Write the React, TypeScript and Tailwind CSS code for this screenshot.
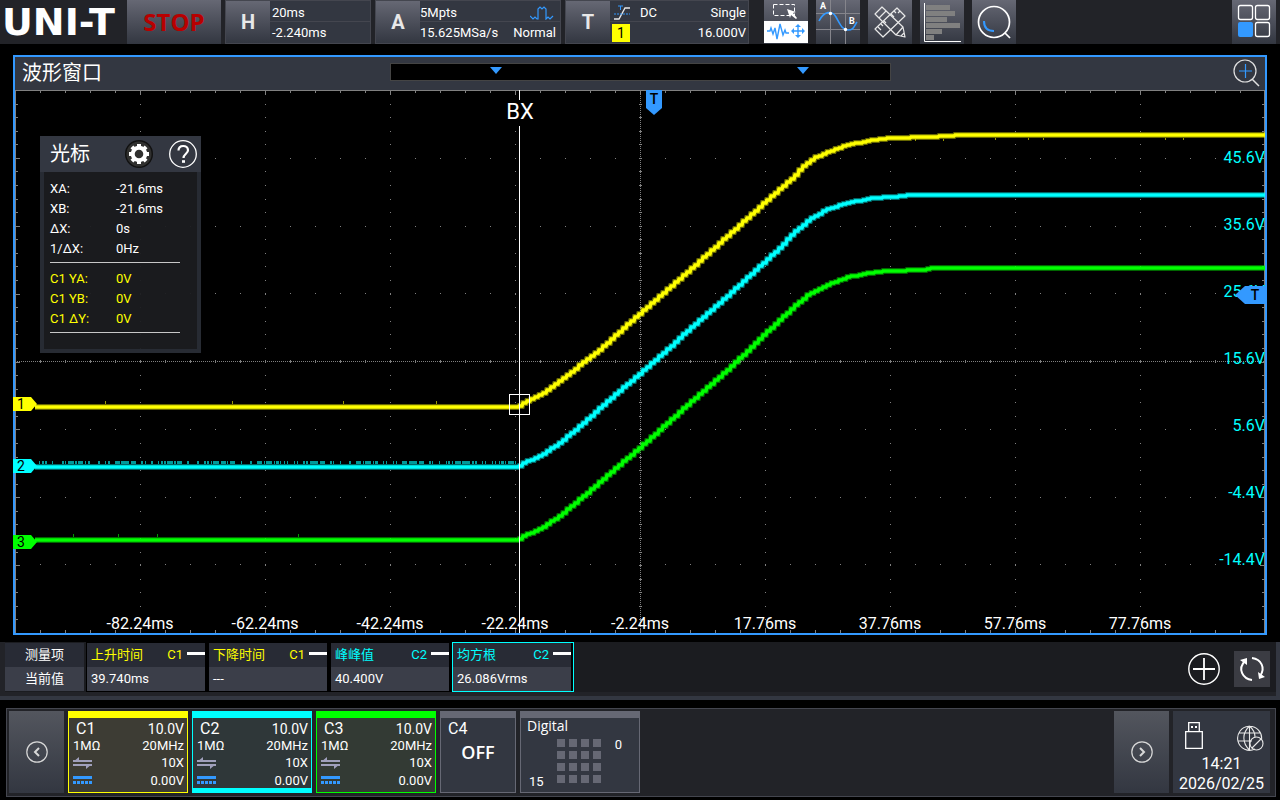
import type { ReactNode } from "react";

const PLOT_W = 1250;
const PLOT_H = 543;

type Point = [number, number];

const rise: Record<string, Point[]> = {
  c1: [
    [0, 317], [502, 317], [506, 314], [525, 305], [542, 292], [562, 277], [585, 259], [608, 238],
    [625, 223], [648, 203], [675, 179], [715, 143], [765, 98], [775, 90], [785, 79], [798, 68],
    [815, 61], [832, 55], [852, 51], [875, 48], [915, 47], [945, 45], [1250, 45],
  ],
  c2: [
    [0, 377], [502, 377], [506, 374], [525, 366], [545, 352], [568, 333], [592, 311], [625, 283],
    [648, 263], [675, 238], [715, 203], [765, 157], [778, 143], [795, 129], [812, 119], [832, 113],
    [858, 108], [888, 106], [893, 105], [1250, 105],
  ],
  c3: [
    [0, 450], [502, 450], [506, 447], [525, 439], [545, 425], [568, 406], [592, 385], [625, 357],
    [655, 330], [675, 312], [715, 277], [765, 229], [778, 217], [795, 203], [812, 195], [832, 187],
    [848, 184], [868, 181], [908, 180], [915, 178], [1250, 178],
  ],
};

const valueAt = (points: Point[], x: number) => {
  const i = points.findIndex((p) => p[0] > x);
  if (i < 1) return points[points.length - 1][1];
  const [x0, y0] = points[i - 1];
  const [x1, y1] = points[i];
  return y0 + ((y1 - y0) * (x - x0)) / (x1 - x0);
};

// sampled every 4px and held for most of a step, so the slope looks jagged like the scope draws it
const steppedPath = (points: Point[]) => {
  let d = `M20 ${points[0][1]}`;
  for (let x = 24; x <= PLOT_W; x += 4) {
    d += `H${x - 1}L${x} ${Math.round(valueAt(points, x))}`;
  }
  return d + `H${PLOT_W}`;
};

const range = (n: number) => Array.from({ length: n }, (_, i) => i);

const noiseTicks = range(480)
  .map((i) => 22 + i)
  .filter((x) => Math.sin(x * 0.7) + Math.sin(x * 1.9) + Math.sin(x * 0.13) > 0.1);

const traces = [
  { id: "c1", color: "#ffff00" },
  { id: "c2", color: "#00ffff" },
  { id: "c3", color: "#00ff00" },
];

const timeLabels = [
  "-82.24ms", "-62.24ms", "-42.24ms", "-22.24ms", "-2.24ms", "17.76ms", "37.76ms", "57.76ms", "77.76ms",
];
const voltLabels = ["45.6V", "35.6V", "25.6V", "15.6V", "5.6V", "-4.4V", "-14.4V"];

const pctX = (x: number) => `${(x / PLOT_W) * 100}%`;
const pctY = (y: number) => `${(y / PLOT_H) * 100}%`;

const Graticule = () => {
  const stepX = PLOT_W / 50;
  const stepY = PLOT_H / 40;
  return (
    <g stroke="#808080" strokeWidth="1" shapeRendering="crispEdges">
      {range(9).map((i) =>
        i === 4 ? null : (
          <line key={`v${i}`} x1={(i + 1) * 125 + 0.5} x2={(i + 1) * 125 + 0.5} y1={stepY} y2={PLOT_H}
            strokeDasharray={`1 ${stepY - 1}`} />
        )
      )}
      {range(7).map((i) =>
        i === 3 ? null : (
          <line key={`h${i}`} x1={stepX} x2={PLOT_W} y1={Math.round((i + 1) * 67.75) + 0.5} y2={Math.round((i + 1) * 67.75) + 0.5}
            strokeDasharray={`1 ${stepX - 1}`} />
        )
      )}
      <path d={`M0 271.5H${PLOT_W}M625.5 0V${PLOT_H}`} strokeDasharray="1 1" />
      <path d={`M0 .5H${PLOT_W}M.5 0V${PLOT_H}M${PLOT_W - 0.5} 0V${PLOT_H}`} />
      {range(49).map((i) => {
        const x = (i + 1) * stepX + 0.5;
        const len = (i + 1) % 5 === 0 ? 5 : 3;
        return <path key={x} d={`M${x} 0v${len}M${x} ${PLOT_H}v-${len}M${x} 270v3`} />;
      })}
      {range(39).map((i) => {
        const y = Math.round((i + 1) * stepY) + 0.5;
        const len = (i + 1) % 5 === 0 ? 5 : 3;
        return <path key={y} d={`M0 ${y}h${len}M${PLOT_W} ${y}h-${len}M624 ${y}h3`} />;
      })}
    </g>
  );
};

const Waveforms = () => (
  <svg
    className="absolute inset-0 h-full w-full"
    viewBox={`0 0 ${PLOT_W} ${PLOT_H}`}
    preserveAspectRatio="none"
  >
    <Graticule />
    {traces.map(({ id, color }) => {
      const d = steppedPath(rise[id]);
      return (
        <g key={id} fill="none" stroke={color}>
          <path d={d} strokeWidth="6" strokeOpacity="0.4" />
          <path d={d} strokeWidth="3.500" />
        </g>
      );
    })}
    <g shapeRendering="crispEdges" fill="none" strokeWidth="1">
      <path d={noiseTicks.map((x) => `M${x + 0.5} 371v3`).join("")} stroke="#00ffff" strokeOpacity="0.6" />
      <path d="M90.5 311v3M217.5 311v3M328.5 311v3M421.5 311v3M900.5 49v2M928.5 49v2M980.5 48v2M1013.5 48v2M1028.5 48v2M1150.5 48v2M1168.5 48v2" stroke="#ffff00" strokeOpacity="0.6" />
      <path d="M58.5 444v3M103.5 444v3M142.5 444v3M283.5 444v3" stroke="#00ff00" strokeOpacity="0.6" />
      <path d="M504.5 0V10M504.5 36V543" stroke="#ffffff" />
      <rect x="494.5" y="304.5" width="20" height="20" stroke="#ffffff" />
    </g>
  </svg>
);

const ChannelTag = ({ label, y, fill }: { label: string; y: number; fill: string }) => (
  <button className="absolute -left-0.5 h-3.5 w-6 -translate-y-1/2" style={{ top: pctY(y) }}>
    <svg className="absolute inset-0" width="24" height="14" viewBox="0 0 24 14">
      <path d="M0 0H18L24 7L18 14H0Z" fill={fill} />
    </svg>
    <span className="relative block w-4 text-center text-sm leading-3.5 text-black">{label}</span>
  </button>
);

const CursorPanel = () => {
  const rows = [
    ["XA:", "-21.6ms"],
    ["XB:", "-21.6ms"],
    ["ΔX:", "0s"],
    ["1/ΔX:", "0Hz"],
  ];
  const yRows = [
    ["C1 YA:", "0V"],
    ["C1 YB:", "0V"],
    ["C1 ΔY:", "0V"],
  ];
  return (
    <section className="absolute left-[25px] top-[46px] w-[161px] border-4 border-t-0 border-[#272b33] bg-[#1b1c20]/95">
      <header className="-mx-1 flex h-9 items-center bg-[#333741] pl-2.5 pr-1">
        <h2 className="flex-1 text-xl text-white">光标</h2>
        <button aria-label="Settings" className="mr-4">
          <svg width="28" height="28" viewBox="0 0 28 28">
            <circle cx="14" cy="14" r="13.3" fill="#30302f" stroke="#111" strokeWidth="1.4" />
            <circle cx="14" cy="14" r="6.3" fill="none" stroke="#fff" strokeWidth="4" />
            <g stroke="#fff" strokeWidth="4">
              <path d="M14 4v3M14 21v3M4 14h3M21 14h3M6.9 6.9l2 2M19.1 19.1l2 2M6.9 21.1l2-2M19.1 8.9l2-2" />
            </g>
          </svg>
        </button>
        <button aria-label="Help">
          <svg width="28" height="28" viewBox="0 0 28 28" fill="none" stroke="#fff">
            <circle cx="14" cy="14" r="13.3" strokeWidth="1.3" />
            <path d="M9.5 10.5C9.5 7.5 11.5 6 14.2 6C17 6 19 7.7 19 10.2C19 13.5 14.5 14 14.5 18" strokeWidth="2.2" />
            <path d="M13 21.5h3" strokeWidth="2.6" />
          </svg>
        </button>
      </header>
      <div className="pb-4 pl-1.5 pr-[17px] pt-[7px] text-[13px] leading-5">
        <dl className="grid grid-cols-[66px_1fr] border-b border-[#c8c8c8] pb-[3px] text-white">
          {rows.map(([name, value]) => (
            <div key={name} className="contents">
              <dt>{name}</dt>
              <dd>{value}</dd>
            </div>
          ))}
        </dl>
        <dl className="grid grid-cols-[66px_1fr] border-b border-[#c8c8c8] pb-[3px] pt-1.5 text-[#ffff00]">
          {yRows.map(([name, value]) => (
            <div key={name} className="contents">
              <dt>{name}</dt>
              <dd>{value}</dd>
            </div>
          ))}
        </dl>
      </div>
    </section>
  );
};

const InfoBlock = ({ letter, className, children }: { letter: string; className: string; children: ReactNode }) => (
  <div className={`mr-1 flex h-11 border border-[#44464f] bg-[#333741] ${className}`}>
    <button className="w-11 shrink-0 bg-linear-to-b from-[#666874] to-[#333741] text-xl font-bold text-[#e8e8e8]">
      {letter}
    </button>
    <div className="flex min-w-0 flex-1 flex-col text-[13px] text-white">{children}</div>
  </div>
);

const ToolButton = ({ label, children }: { label: string; children: ReactNode }) => (
  <button aria-label={label} className="h-11 w-11 bg-linear-to-b from-[#666874] to-[#333741]">
    <svg width="44" height="44" viewBox="0 0 44 44" fill="none">
      {children}
    </svg>
  </button>
);

const TopBar = () => (
  <header className="flex h-11 bg-[#222328]">
    <div className="w-[127px] shrink-0 whitespace-nowrap pl-0.5 font-['DejaVu_Sans'] text-[38px] font-bold leading-11 text-white">UNI-T</div>
    <button className="mr-1 w-[94px] shrink-0 bg-linear-to-b from-[#666874] to-[#333741] font-['Open_Sans'] text-2xl font-bold text-[#b80000]">
      STOP
    </button>
    <InfoBlock letter="H" className="w-[146px]">
      <div className="flex h-[21px] items-center border-b border-[#44464f] px-0.5 pt-1">20ms</div>
      <div className="flex h-[21px] items-center px-0.5">-2.240ms</div>
    </InfoBlock>
    <InfoBlock letter="A" className="w-[186px]">
      <div className="flex h-[21px] items-center justify-between border-b border-[#44464f] pr-1.5 pt-1">
        5Mpts
        <svg width="24" height="14" viewBox="0 0 24 14" fill="none" stroke="#3399ff" strokeWidth="1.2">
          <path d="M0 10l3 3 2-2 2 2h1V3l2-2 2 2 2-2 2 2v10l2-2 2 2 3-3" />
        </svg>
      </div>
      <div className="flex h-[21px] items-center justify-between pr-1">
        <span>15.625MSa/s</span>
        <span>Normal</span>
      </div>
    </InfoBlock>
    <InfoBlock letter="T" className="w-[184px]">
      <div className="flex h-[21px] items-center border-b border-[#44464f] pl-1 pr-0.5 pt-1">
        <svg width="16" height="16" viewBox="0 0 16 16" fill="none">
          <path d="M0 14h5l6-11h5" stroke="#e8e8e8" strokeWidth="1.3" />
          <path d="M0 9h16" stroke="#3399ff" strokeDasharray="2 1" />
          <path d="M4 1h5M6.500 1v4" stroke="#3399ff" />
        </svg>
        <span className="ml-2.5 flex-1">DC</span>
        <span>Single</span>
      </div>
      <div className="flex h-[21px] items-center justify-between pl-0.5 pr-0.5">
        <span className="h-[18px] w-[18px] bg-[#ffff00] text-center text-sm leading-[18px] text-black">1</span>
        <span>16.000V</span>
      </div>
    </InfoBlock>
    <nav className="ml-[11px] flex flex-1 gap-2">
      <ToolButton label="Region select">
        <rect y="21" width="44" height="22" fill="#fff" />
        <rect x="9.500" y="4.500" width="21" height="11" stroke="#fff" strokeDasharray="4 2" />
        <path d="M23 9l9 3-3 1 4 5-1 1-5-4-1 3z" fill="#fff" />
        <path d="M3 31h3l1-3 2 6 2-6 2 11 3-15 3 11 2-5 1 3h3" stroke="#3399ff" strokeWidth="1.4" />
        <path d="M28 31h12M34 25v12" stroke="#3399ff" strokeWidth="1.4" />
        <path d="M34 24l3 3h-6zM34 38l3-3h-6zM27 31l3-3v6zM41 31l-3-3v6z" fill="#3399ff" />
      </ToolButton>
      <ToolButton label="Cursor">
        <path d="M14.500 0V44M29.500 0V44M0 13.500H44M0 29.500H44" stroke="#85858c" />
        <path d="M3 21C8 11 16 10 20 17S26 30 32 30S38 26 41 22" stroke="#3399ff" strokeWidth="1.6" />
        <circle cx="14.500" cy="13.500" r="1.700" fill="#fff" />
        <circle cx="29.500" cy="29.500" r="1.700" fill="#fff" />
        <text x="4" y="9" fill="#fff" fontSize="9" fontWeight="700">A</text>
        <text x="33" y="24" fill="#fff" fontSize="9" fontWeight="700">B</text>
      </ToolButton>
      <ToolButton label="Measure">
        <g stroke="#e8e8e8" strokeWidth="1.2" strokeLinejoin="round">
          <path d="M29 8L37 16L15 37L7 29Z" />
          <path d="M26 11l2 2M23 14l3 3M32 11l-2 2M13 24l2 2M10 27l3 3M16 21l2 2" />
          <path d="M7 14L14 7L35 27L37 37L28 35ZM11 18l7-7M28 35l7-8M33 36l3-3" />
        </g>
      </ToolButton>
      <ToolButton label="Histogram">
        <path d="M6 5h24v5H6zM6 11h29v5H6zM6 17h21v5H6zM6 23h34v5H6zM6 29h16v5H6zM6 35h8v5H6z" fill="#808080" />
        <path d="M4.500 3V41.500H41" stroke="#fff" />
      </ToolButton>
      <ToolButton label="Search">
        <circle cx="22" cy="22" r="15.500" stroke="#fff" strokeWidth="1.700" />
        <path d="M33 33l5 5" stroke="#fff" strokeWidth="1.700" />
        <path d="M12 21C12 28 16 31 22 31" stroke="#3399ff" strokeWidth="2" />
      </ToolButton>
    </nav>
    <div className="mr-1">
      <ToolButton label="Menu">
        <g stroke="#fff" strokeWidth="1.300">
          <rect x="6.500" y="5.500" width="14" height="14" rx="2" />
          <rect x="23.500" y="5.500" width="14" height="14" rx="2" />
          <rect x="23.500" y="22.500" width="14" height="14" rx="2" />
        </g>
        <rect x="6" y="22" width="15" height="15" rx="2" fill="#3399ff" />
      </ToolButton>
    </div>
  </header>
);

const WaveWindow = () => (
  <main className="mx-[13px] mt-[11px] flex flex-1 flex-col border-2 border-[#3399ff]">
    <header className="grid h-[33px] shrink-0 grid-cols-[1fr_501px_1fr] items-center bg-[#333741] px-[5px] pb-0.5">
      <h1 className="pl-0.5 text-xl leading-7 text-white">波形窗口</h1>
      <div className="mt-1.5 flex h-[18px] justify-between self-start border border-[#444] bg-black pl-[99px] pr-[81px] pt-[3px]">
        <svg width="12" height="7" viewBox="0 0 12 7"><path d="M0 0h12L6 7z" fill="#3399ff" /></svg>
        <svg width="12" height="7" viewBox="0 0 12 7"><path d="M0 0h12L6 7z" fill="#3399ff" /></svg>
      </div>
      <button aria-label="Zoom in" className="justify-self-end">
        <svg width="27" height="28" viewBox="0 0 27 28" fill="none">
          <circle cx="12" cy="12" r="11" stroke="#e0e0e0" strokeWidth="1.200" />
          <path d="M19 20l7 7" stroke="#e0e0e0" strokeWidth="1.500" />
          <path d="M6 12h13M12.500 5v14" stroke="#3399ff" strokeWidth="1.200" />
        </svg>
      </button>
    </header>
    <div className="relative min-h-[400px] flex-1 bg-black">
      <Waveforms />
      {timeLabels.map((label, i) => (
        <span key={label} className="absolute bottom-0 -translate-x-1/2 text-base leading-4.5 text-white" style={{ left: pctX((i + 1) * 125) }}>
          {label}
        </span>
      ))}
      {voltLabels.map((label, i) => (
        <span key={label} className="absolute right-0 -translate-y-1/2 text-base leading-5 text-[#00ffff]" style={{ top: pctY(68 + i * 67) }}>
          {label}
        </span>
      ))}
      <span className="absolute top-2.5 -translate-x-1/2 text-[22px] leading-6 text-white" style={{ left: pctX(505) }}>
        BX
      </span>
      <div className="absolute top-0 h-[25px] w-4" style={{ left: pctX(631) }}>
        <svg className="absolute inset-0" width="16" height="25" viewBox="0 0 16 25">
          <path d="M0 0H16V18L8 25L0 18Z" fill="#3399ff" />
        </svg>
        <span className="relative block text-center text-sm font-medium leading-4.5 text-black">T</span>
      </div>
      <div className="absolute right-0 h-[18px] w-[30px] -translate-y-1/2" style={{ top: pctY(205) }}>
        <svg className="absolute inset-0" width="30" height="18" viewBox="0 0 30 18">
          <path d="M0 9L10 0H30V18H10Z" fill="#3399ff" />
        </svg>
        <span className="relative block pl-2.5 text-center text-sm font-medium leading-4.5 text-black">T</span>
      </div>
      <ChannelTag label="1" y={314} fill="#ffff00" />
      <ChannelTag label="2" y={376} fill="#00ffff" />
      <ChannelTag label="3" y={452} fill="#00ff00" />
      <CursorPanel />
    </div>
  </main>
);

const measurements = [
  { name: "上升时间", source: "C1", value: "39.740ms", text: "text-[#ffff00]", border: "border-transparent" },
  { name: "下降时间", source: "C1", value: "---", text: "text-[#ffff00]", border: "border-transparent" },
  { name: "峰峰值", source: "C2", value: "40.400V", text: "text-[#00ffff]", border: "border-transparent" },
  { name: "均方根", source: "C2", value: "26.086Vrms", text: "text-[#00ffff]", border: "border-[#00ffff]" },
];

const MeasureBar = () => (
  <section className="mt-[7px] border-b-4 border-r-4 border-[#333741] bg-[#222328] pb-1 pl-[5px] text-[13px]">
    <div className="flex h-[50px] items-center bg-[#1b1c20]">
      <div className="mr-0.5 w-[79px] text-center leading-6 text-white">
        <div className="bg-[#282b35]">测量项</div>
        <div className="bg-[#3b3e49]">当前值</div>
      </div>
      {measurements.map(({ name, source, value, text, border }) => (
        <button key={name} className={`w-[122px] border bg-black pr-0.5 text-left leading-6 ${border}`}>
          <span className={`flex h-6 items-center bg-[#282b35] pl-1 ${text}`}>
            <span className="flex-1">{name}</span>
            <span>{source}</span>
            <span className="mb-1 ml-1 h-[3px] w-[18px] bg-white" />
          </span>
          <span className="block h-6 bg-[#3b3e49] pl-1 text-white">{value}</span>
        </button>
      ))}
      <button aria-label="Add measurement" className="ml-auto mr-3.5 mt-1">
        <svg width="32" height="32" viewBox="0 0 32 32" fill="none" stroke="#fff">
          <circle cx="16" cy="16" r="15.200" strokeWidth="1.400" />
          <path d="M5 16h22M16 5v22" strokeWidth="1.800" />
        </svg>
      </button>
      <button aria-label="Reset statistics" className="mr-1.5 mt-1 h-9 w-9 bg-[#3b3c43]">
        <svg width="36" height="36" viewBox="0 0 36 36" fill="none">
          <path d="M18 29C9 28 3 18 11 10M18 7C27 8 32 17 26 25" stroke="#fff" strokeWidth="2" />
          <path d="M6 9l7-2v7zM31 26l-6 2-1-7z" fill="#fff" />
        </svg>
      </button>
    </div>
  </section>
);

const channels = [
  { name: "C1", frame: "border-[#ffff00] bg-[#3d3c34]", cap: "bg-[#ffff00]", foot: "" },
  { name: "C2", frame: "border-[#00ffff] bg-[#2f3739]", cap: "bg-[#00ffff]", foot: "bg-[#00ffff]" },
  { name: "C3", frame: "border-[#00ff00] bg-[#333a34]", cap: "bg-[#00ff00]", foot: "" },
];

const CouplingIcons = () => (
  <svg width="20" height="32" viewBox="0 0 20 32" fill="none">
    <path d="M0 5h19M0 9h19" stroke="#a0a0bc" strokeWidth="2" />
    <path d="M0 6l6-5v5zM19 8l-6 5V8z" fill="#a0a0bc" />
    <path d="M0 20h19v3H0z" fill="#3399ff" />
    <path d="M0 26.500h19" stroke="#3399ff" strokeWidth="3" strokeDasharray="3 1" />
  </svg>
);

const ArrowButton = ({ label, d }: { label: string; d: string }) => (
  <button aria-label={label} className="flex w-[55px] items-center justify-center bg-linear-to-b from-[#53565e] to-[#333741]">
    <svg width="22" height="22" viewBox="0 0 22 22" fill="none" stroke="#d8d8d8">
      <circle cx="11" cy="11" r="10.200" strokeWidth="1.200" />
      <path d={d} strokeWidth="2" />
    </svg>
  </button>
);

const ChannelBar = () => (
  <footer className="mb-[3px] ml-1.5 mr-1 mt-2 flex h-[89px] gap-1 border border-[#44464f] bg-[#222328] pb-[3px] pl-0.5 pr-[5px] pt-0.5 text-white">
    <ArrowButton label="Previous channels" d="M13 7l-4 4 4 4" />
    {channels.map(({ name, frame, cap, foot }) => (
      <button key={name} className={`relative flex w-[120px] flex-col border text-left ${frame}`}>
        <span className={`block h-1.5 w-full shrink-0 ${cap}`} />
        <span className="flex w-full justify-between pl-[7px] pr-[3px] pt-0.5 leading-4.5">
          <span className="text-base leading-4.5">{name}</span>
          <span className="text-sm leading-4.5">10.0V</span>
        </span>
        <span className="flex w-full justify-between pl-1 pr-[3px] text-[13px] leading-4">
          <span>1MΩ</span>
          <span>20MHz</span>
        </span>
        <span className="flex w-full items-center justify-between pl-1 pr-[3px]">
          <CouplingIcons />
          <span className="text-right text-[13px] leading-4.5">
            10X
            <br />
            0.00V
          </span>
        </span>
        {foot && <span className={`absolute inset-x-0 bottom-0 h-1 ${foot}`} />}
      </button>
    ))}
    <button className="flex w-[76px] flex-col border border-[#666874] bg-[#333741]">
      <span className="block h-1.5 w-full bg-[#666874]" />
      <span className="w-full pl-[7px] pt-0.5 text-left text-base leading-4.5">C4</span>
      <span className="w-full text-center font-['Open_Sans'] text-lg font-semibold leading-7">OFF</span>
    </button>
    <button className="flex w-[120px] flex-col border border-[#666874] bg-[#333741] text-left">
      <span className="block h-1.5 w-full bg-[#666874]" />
      <span className="pl-1.5 font-['Open_Sans'] text-sm leading-4">Digital</span>
      <span className="flex w-full flex-1 justify-between pl-2 pr-[17px] pt-px text-[13px] leading-5">
        <span className="self-end leading-5">15</span>
        <span className="mt-1 grid h-11 grid-cols-4 gap-1 self-start">
          {range(16).map((i) => (
            <span key={i} className="h-2 w-2 bg-[#666874]" />
          ))}
        </span>
        <span>0</span>
      </span>
    </button>
    <div className="flex-1" />
    <ArrowButton label="Next channels" d="M9 7l4 4-4 4" />
    <div className="w-[97px] bg-[#333741] px-1 pt-2 text-center">
      <div className="flex justify-between pl-2 pr-0.5">
        <button aria-label="USB">
          <svg width="18" height="27" viewBox="0 0 18 27" fill="none" stroke="#fff" strokeWidth="1.300">
            <path d="M.7 9.700H17.300V26.300H.7ZM3.700 9.500V.7H14.300V9.500" />
            <path d="M6 5h2M10 5h2" strokeWidth="2" />
          </svg>
        </button>
        <button aria-label="Network" className="mt-1.5">
          <svg width="27" height="26" viewBox="0 0 27 26" fill="none" stroke="#e8e8e8" strokeWidth="1.100">
            <path d="M18 24A12 12 0 1 1 24.500 15M2 8h22M1 16h14M12.500 1C5 8 5 18 12.500 25M12.500 1C17 5 18 9 18 12M12.500 1V25" />
            <circle cx="19.500" cy="18.500" r="6.500" />
            <path d="M15 23l9-9" />
          </svg>
        </button>
      </div>
      <div className="pt-[3px] text-base leading-5">
        <time className="block">14:21</time>
        <time className="block">2026/02/25</time>
      </div>
    </div>
  </footer>
);

const App = () => (
  <div className="flex min-h-screen flex-col overflow-x-hidden bg-black font-[Roboto,'Noto_Sans_CJK_SC',sans-serif]">
    <TopBar />
    <WaveWindow />
    <MeasureBar />
    <ChannelBar />
  </div>
);

export default App;
